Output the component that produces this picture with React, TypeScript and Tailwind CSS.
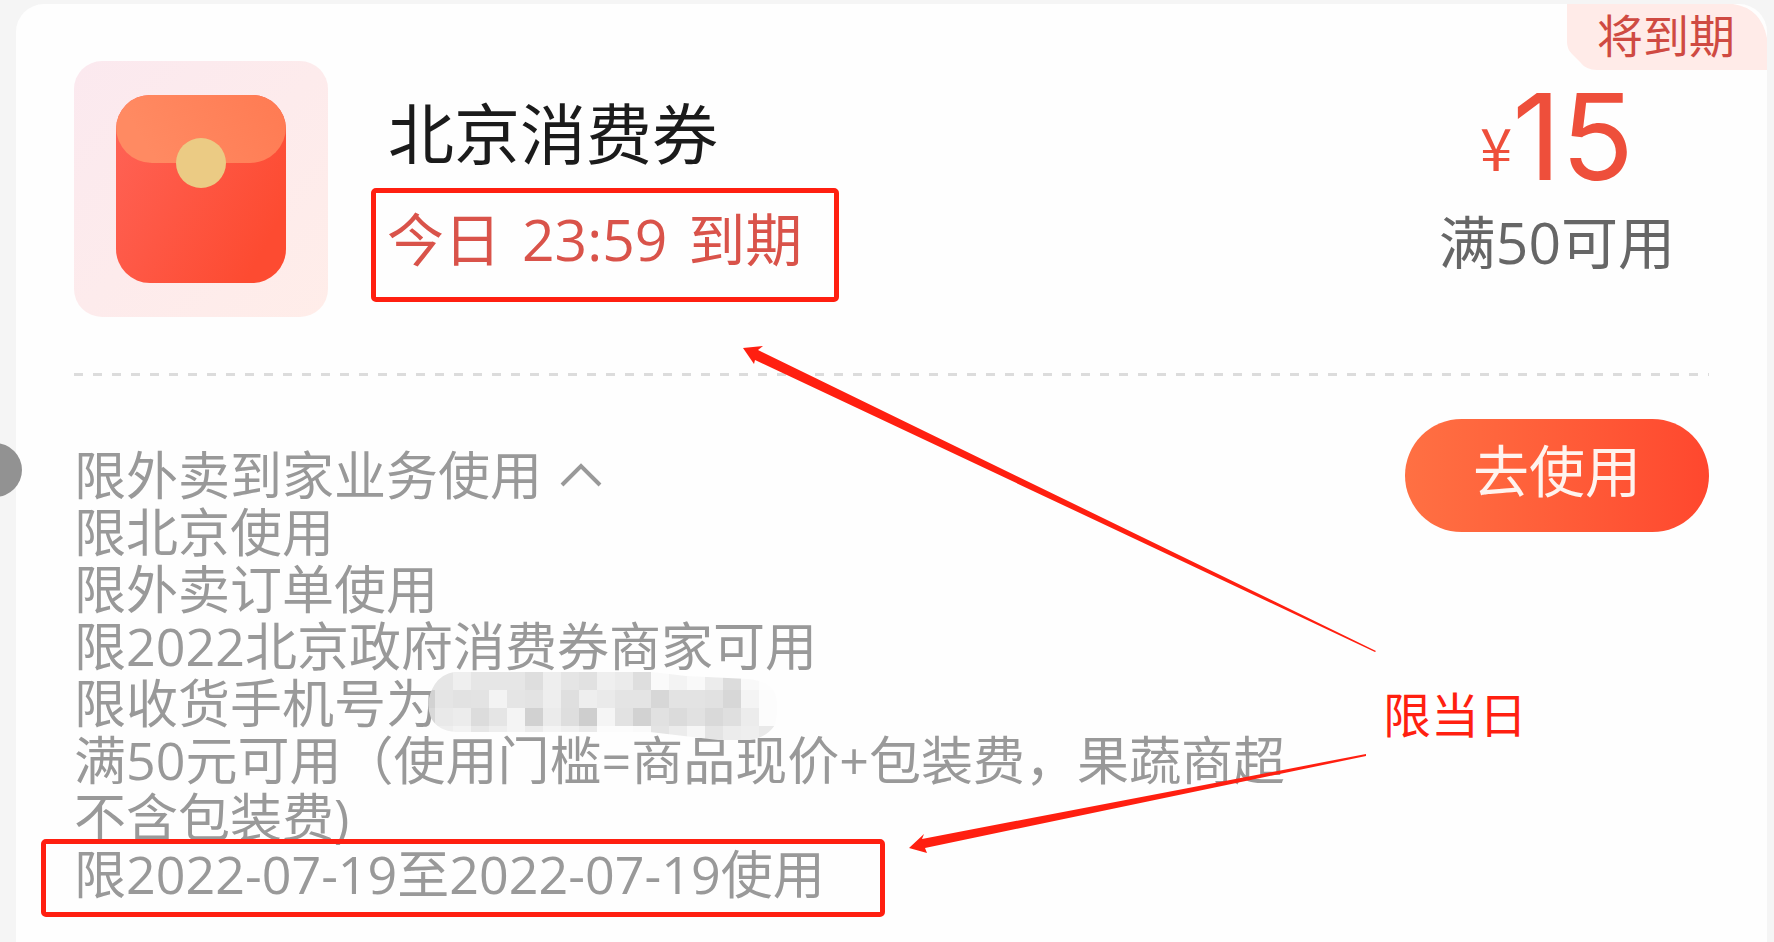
import React from "react";

const mosaic: string[][] = [
  ["#e6e6e6", "#e6e6e6", "#efefef", "#e6e6e6", "#e6e6e6", "#e6e6e6", "#dedede", "#eeeeee", "#e5e5e5", "#e1e1e1", "#efefef", "#ebebeb", "#dedede", "#fafafa", "#f3f3f3", "#f9f9f9", "#ececec", "#dcdcdc", "#f9f9f9", "#fdfdfd"],
  ["#d2d2d2", "#e5e5e5", "#e2e2e2", "#e3e3e3", "#f3f3f3", "#e5e5e5", "#e3e3e3", "#eeeeee", "#dfdfdf", "#eeeeee", "#eaeaea", "#e4e4e4", "#e4e4e4", "#d7d7d7", "#e3e3e3", "#e3e3e3", "#e1e1e1", "#d7d7d7", "#f4f4f4", "#fcfcfc"],
  ["#d8d8d8", "#e9e9e9", "#ececec", "#dcdcdc", "#e5e5e5", "#f4f4f4", "#d1d1d1", "#ebebeb", "#dedede", "#cecece", "#f5f5f5", "#e2e2e2", "#d2d2d2", "#e1e1e1", "#dbdbdb", "#e1e1e1", "#d9d9d9", "#dfdfdf", "#ececec", "#fcfcfc"],
  ["#eeeeee", "#eeeeee", "#f3f3f3", "#e7e7e7", "#eeeeee", "#f4f4f4", "#ebebeb", "#f4f4f4", "#f0f0f0", "#eaeaea", "#fcfcfc", "#fcfcfc", "#fafafa", "#e4e4e4", "#ececec", "#f6f6f6", "#e4e4e4", "#ececec", "#eeeeee", "#e9e9e9"],
];

function Envelope() {
  return (
    <svg viewBox="0 0 170 188" className="h-[188px] w-[170px]" aria-hidden="true">
      <defs>
        <linearGradient id="body" x1="0" y1="0" x2="1" y2="0.6">
          <stop offset="0" stopColor="#ff6458" />
          <stop offset="1" stopColor="#fd4b31" />
        </linearGradient>
        <linearGradient id="flap" x1="0" y1="0.4" x2="1" y2="0">
          <stop offset="0" stopColor="#ff8a62" />
          <stop offset="1" stopColor="#ff7850" />
        </linearGradient>
        <clipPath id="shape">
          <rect width="170" height="188" rx="34" />
        </clipPath>
      </defs>
      <g clipPath="url(#shape)">
        <rect width="170" height="188" fill="url(#body)" />
        <rect y="-40" width="170" height="108" rx="36" fill="url(#flap)" />
      </g>
      <circle cx="85" cy="68" r="25" fill="#ebcb84" />
    </svg>
  );
}

function Mosaic() {
  return (
    <svg viewBox="0 0 350 70" className="absolute -top-[3px] left-[354px] h-[70px] w-[350px]" aria-hidden="true">
      <clipPath id="brush">
        <path d="M26 1H224L258 5 320 8Q340 10 346 20Q352 34 347 54Q338 67 322 69H290L222 61H28Q10 60 3 47Q-4 30 7 13Q14 3 26 1Z" />
      </clipPath>
      <g clipPath="url(#brush)">
        {mosaic.map((row, r) =>
          row.map((fill, c) => (
            <rect key={`${r}-${c}`} x={c * 18 - 11} y={r * 18 + 1} width="18" height="18" fill={fill} shapeRendering="crispEdges" />
          )),
        )}
      </g>
    </svg>
  );
}

export default function App() {
  return (
    <main className="relative min-h-screen overflow-hidden bg-[#f5f5f5] pt-1 pr-[7px] pl-4 font-['Open_Sans','Noto_Sans_CJK_SC',sans-serif]">
      <article className="relative min-h-[938px] rounded-t-[28px] bg-[#fefefe] pt-[57px] pr-[58px] pl-[58px]">
        <div className="absolute top-0 right-0 text-[46px] leading-[62px] text-[#cf4a42]">
          <svg viewBox="0 0 200 66" preserveAspectRatio="none" className="absolute inset-0 h-full w-full" aria-hidden="true">
            <path d="M0 0H166Q194 4 200 34V66H30Q19 66 13 58L5 50Q0 45 0 38Z" fill="#ffebe8" />
          </svg>
          <span className="relative block pr-8 pb-1 pl-[30px]">将到期</span>
        </div>

        <header className="flex justify-between">
          <div className="flex gap-[43px]">
            <div className="flex h-64 w-[254px] items-center justify-center rounded-[28px] bg-linear-to-br from-[#fbe9ef] to-[#ffede9]">
              <Envelope />
            </div>
            <div className="pt-8">
              <h1 className="pl-[17px] text-[66px] leading-[80px] text-[#1b1b1b]">北京消费券</h1>
              <p className="mt-[15px] flex w-[468px] gap-[21px] rounded-[5px] border-5 border-[#ff1f10] pb-[11px] pl-[11px] text-[57px] leading-[93px] whitespace-nowrap text-[#d9534a]">
                <span>今日</span>
                <span>23:59</span>
                <span>到期</span>
              </p>
            </div>
          </div>
          <div className="pr-[34px]">
            <div className="flex items-end justify-center pt-[6px] font-['Inter','Noto_Sans_CJK_SC',sans-serif] leading-[140px] text-[#ee4f3b]">
              <span className="pb-8 text-[58px] leading-[58px] font-['Noto_Sans_CJK_SC',sans-serif]">¥</span>
              <span className="text-[120px]">15</span>
            </div>
            <div className="text-center text-[57px] leading-[70px] text-[#666]">满50可用</div>
          </div>
        </header>

        <div className="mt-14 h-[3px] bg-[repeating-linear-gradient(90deg,#dcdcdc_0_9px,transparent_9px_19px)]" />

        <div className="mt-[43px] flex items-start justify-between">
          <ul className="mt-[27px] text-[52px] leading-[57px] whitespace-nowrap text-[#999]">
            <li className="flex items-center gap-[18px]">
              限外卖到家业务使用
              <button type="button" aria-label="收起" className="text-[#999]">
                <svg viewBox="0 0 42 26" className="h-[26px] w-[42px]" fill="none" stroke="currentColor" strokeWidth="4">
                  <path d="M2 23 21 4 40 23" />
                </svg>
              </button>
            </li>
            <li>限北京使用</li>
            <li>限外卖订单使用</li>
            <li>限2022北京政府消费券商家可用</li>
            <li className="relative">
              限收货手机号为
              <Mosaic />
            </li>
            <li>
              满50元可用（使用门槛=商品现价+包装费，果蔬商超
              <br />
              不含包装费)
            </li>
            <li className="relative">
              限2022-07-19至2022-07-19使用
              <span className="absolute -top-[6px] -left-[33px] h-[78px] w-[844px] rounded-[5px] border-5 border-[#ff1f10]" />
            </li>
          </ul>
          <button type="button" className="h-[113px] w-[304px] shrink-0 rounded-full bg-linear-to-r from-[#ff7043] to-[#ff472e] pb-3 text-[56px] leading-[100px] text-[#fff3ee]">
            去使用
          </button>
        </div>
      </article>

      <span className="absolute top-[443px] -left-[32px] size-[54px] rounded-full bg-[#929292]" />
      <svg viewBox="0 0 1774 942" className="pointer-events-none absolute top-0 left-0 h-[942px] w-[1774px]" fill="#ff1f10" aria-hidden="true">
        <path d="M743 348 763 346 758 350 1376 651 1375 652 755 360 754 364Z" />
        <path d="M909 848 924 834 922 839 1366 754 1366 756 925 848 927 853Z" />
      </svg>
      <p className="absolute top-[680px] left-[1383px] text-[48px] leading-[70px] text-[#ff1f10]">限当日</p>
    </main>
  );
}
